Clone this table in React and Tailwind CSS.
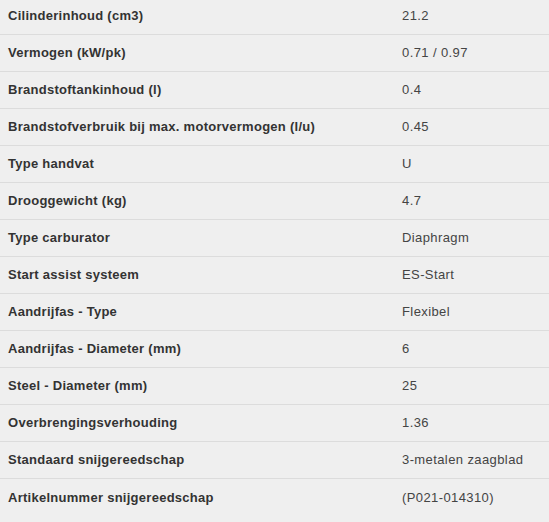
const specs = [
  ["Cilinderinhoud (cm3)", "21.2"],
  ["Vermogen (kW/pk)", "0.71 / 0.97"],
  ["Brandstoftankinhoud (l)", "0.4"],
  ["Brandstofverbruik bij max. motorvermogen (l/u)", "0.45"],
  ["Type handvat", "U"],
  ["Drooggewicht (kg)", "4.7"],
  ["Type carburator", "Diaphragm"],
  ["Start assist systeem", "ES-Start"],
  ["Aandrijfas - Type", "Flexibel"],
  ["Aandrijfas - Diameter (mm)", "6"],
  ["Steel - Diameter (mm)", "25"],
  ["Overbrengingsverhouding", "1.36"],
  ["Standaard snijgereedschap", "3-metalen zaagblad"],
  ["Artikelnummer snijgereedschap", "(P021-014310)"],
];

export default function App() {
  return (
    <div className="w-[549px] h-[522px] overflow-hidden bg-[#efefef] font-['Liberation_Sans',Arial,sans-serif] text-[13px]">
      <div className="-mt-[2px] divide-y divide-[#dcdcdc]">
        {specs.map(([label, value]) => (
          <div key={label} className="flex h-[37px] items-center">
            <div className="w-[394px] pl-2 font-bold tracking-[0.27px] text-[#333333]">
              {label}
            </div>
            <div className="flex-1 pl-2 tracking-[0.4px] text-[#444444]">{value}</div>
          </div>
        ))}
      </div>
    </div>
  );
}
